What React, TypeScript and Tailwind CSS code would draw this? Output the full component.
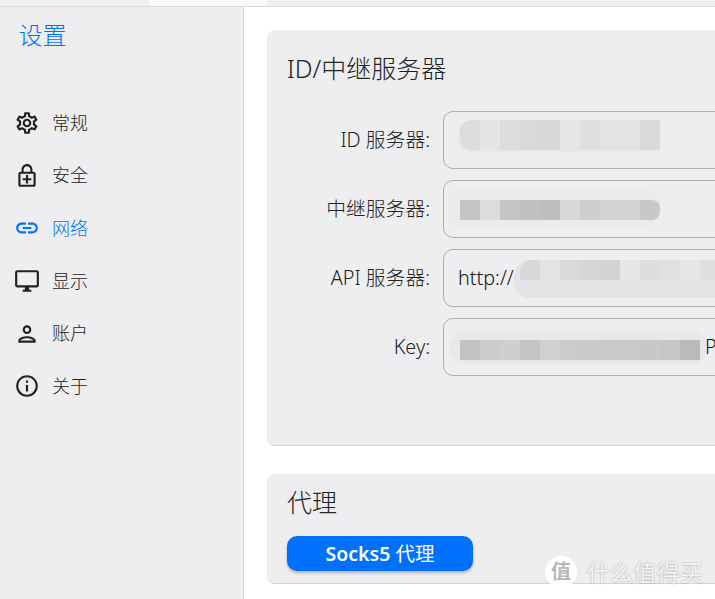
import React from 'react';
import {
  MdOutlineSettings,
  MdOutlineEnhancedEncryption,
  MdLink,
  MdOutlineDesktopWindows,
  MdOutlinePerson,
  MdOutlineInfo,
} from 'react-icons/md';

const font = { fontFamily: '"Noto Sans", "Noto Sans CJK SC", sans-serif' };

const navItems = [
  { label: '常规', icon: MdOutlineSettings },
  { label: '安全', icon: MdOutlineEnhancedEncryption },
  { label: '网络', icon: MdLink, active: true },
  { label: '显示', icon: MdOutlineDesktopWindows },
  { label: '账户', icon: MdOutlinePerson },
  { label: '关于', icon: MdOutlineInfo },
];

// mosaic cells that hide the server addresses in the screenshot
const idCells = ['bg-[#dcdcde]', 'bg-[#e4e4e6]', 'bg-[#dcdcde]', 'bg-[#d9d9db]', 'bg-[#d8d8da]', 'bg-[#e6e6e8]', 'bg-[#dfdfe1]', 'bg-[#e3e3e5]', 'bg-[#e3e3e5]', 'bg-[#dadadc]'];
const relayCells = ['bg-[#c5c5c7]', 'bg-[#dcdcde]', 'bg-[#c5c5c7]', 'bg-[#c0c0c2]', 'bg-[#bebec0]', 'bg-[#d8d8da]', 'bg-[#cfcfd1]', 'bg-[#d3d3d5]', 'bg-[#d3d3d5]', 'bg-[#c8c8ca]'];
const apiCells = ['bg-[#d8d8da]', 'bg-[#e3e3e5]', 'bg-[#d9d9db]', 'bg-[#d6d6d8]', 'bg-[#d2d2d4]', 'bg-[#e6e6e8]', 'bg-[#dddddf]', 'bg-[#e0e0e2]', 'bg-[#e6e6e8]', 'bg-[#dfdfe1]'];
const keyCells = ['bg-[#c2c2c4]', 'bg-[#cccccd]', 'bg-[#cfcfd1]', 'bg-[#c4c4c6]', 'bg-[#d0d0d2]', 'bg-[#cbcbcd]', 'bg-[#cacacc]', 'bg-[#c9c9cb]', 'bg-[#c9c9cb]', 'bg-[#c8c8ca]', 'bg-[#c6c6c8]', 'bg-[#bbbbbd]'];

function Mosaic({ cells, className }: { cells: string[]; className: string }) {
  return (
    <div className={`absolute flex overflow-hidden ${className}`}>
      {cells.map((c, i) => (
        <div key={i} className={`h-full w-5 shrink-0 ${c}`} />
      ))}
    </div>
  );
}

function Field({ label, children }: { label: string; children?: React.ReactNode }) {
  return (
    <div className="flex items-center gap-[13px]">
      <label className="w-[143px] shrink-0 whitespace-nowrap text-right text-[19.8px] font-light leading-6 text-[#222]">{label}</label>
      <div className="relative h-[58px] w-[400px] shrink-0 overflow-hidden rounded-[10px] border border-[#aeaeb0] pl-[14px] text-[19.8px] font-light leading-[56px] text-[#111]">
        {children}
      </div>
    </div>
  );
}

export default function App() {
  return (
    <div className="flex h-[599px] w-[715px] flex-col overflow-hidden bg-white" style={font}>
      {/* Top strip */}
      <div className="flex h-[7px] shrink-0 border-b border-[#dcdcde] bg-[#f0f0f2]">
        <div className="w-[149px]" />
        <div className="w-[118px] bg-[#f9f9f9]" />
      </div>

      <div className="flex min-h-0 flex-1">
        {/* Sidebar */}
        <aside className="w-[244px] shrink-0 border-r border-[#d4d4d6] bg-[#eeeef0]">
          <h1 className="pl-[18.5px] pt-[12px] text-[24px] font-light leading-[32px] text-[#0071ff]">设置</h1>
          <nav className="mt-[46px] flex flex-col">
            {navItems.map(({ label, icon: Icon, active }) => (
              <div
                key={label}
                className={`flex h-[52.6px] items-center gap-[12px] pl-[14px] text-[18px] font-light ${active ? 'text-[#0071ff]' : 'text-[#222]'}`}
              >
                <Icon className={`h-[26px] w-[26px] shrink-0 ${active ? 'text-[#0071ff]' : 'text-[#222]'}`} />
                <span>{label}</span>
              </div>
            ))}
          </nav>
        </aside>

        {/* Main */}
        <main className="relative min-w-0 flex-1 pl-[23px] pt-[23px]">
          <section className="h-[416px] w-[520px] rounded-lg border-b border-[#d4d4d6] bg-[#eeeef0] pl-5 pt-[20px]">
            <h2 className="whitespace-nowrap text-[25px] font-light leading-9 text-[#222]">ID/中继服务器</h2>
            <div className="mt-[25px] flex flex-col gap-[11px]">
              <Field label="ID 服务器:">
                <div className="absolute left-[14px] top-[8px] h-[32px] w-[200px] rounded-l-xl bg-[#e8e8ea]" />
                <Mosaic cells={idCells} className="left-[16px] top-[8px] h-[30px] w-[200px] rounded-l-xl" />
              </Field>
              <Field label="中继服务器:">
                <div className="absolute left-[2px] top-[7px] h-[40px] w-[214px] rounded-full bg-[#ebebed]" />
                <Mosaic cells={relayCells} className="left-[16px] top-[19px] h-[20px] w-[200px] rounded-r-lg" />
              </Field>
              <Field label="API 服务器:">
                <span>http://</span>
                <div className="absolute left-[70px] top-[10px] h-[38px] w-[330px] rounded-l-2xl bg-[#e4e4e6]" />
                <Mosaic cells={apiCells} className="left-[76px] top-[10px] h-[20px] w-[200px] rounded-tl-xl" />
              </Field>
              <Field label="Key:">
                <div className="absolute left-[6px] top-[12px] h-[33px] w-[258px] rounded-full bg-[#e8e8ea]" />
                <Mosaic cells={keyCells} className="left-[16px] top-[21px] h-[20px] w-[240px]" />
                <span className="absolute left-[261px] top-0">Pg</span>
              </Field>
            </div>
          </section>

          <section className="mt-[28px] h-[110px] w-[520px] rounded-lg border-b border-[#d4d4d6] bg-[#eeeef0] pl-5 pt-[10px]">
            <h2 className="text-[25px] font-light leading-9 text-[#222]">代理</h2>
            <button className="mt-[16px] h-[35px] w-[186px] rounded-[10px] bg-[#0071ff] text-[19.5px] font-semibold leading-[35px] text-white shadow-[0_2px_3px_rgba(0,0,0,0.25)]">
              Socks5 <span className="font-normal">代理</span>
            </button>
          </section>

          {/* Watermark */}
          <div className="absolute left-[301px] top-[549px] flex items-center gap-[10px] text-white [text-shadow:0_0_2px_rgba(0,0,0,0.35)]">
            <div className="flex h-[32px] w-[32px] items-center justify-center rounded-full bg-white text-[20px] font-bold text-[#b8b8b8] [text-shadow:none]">
              值
            </div>
            <span className="text-[23.2px] leading-8 text-[#f4f4f4]">什么值得买</span>
          </div>
        </main>
      </div>
    </div>
  );
}
